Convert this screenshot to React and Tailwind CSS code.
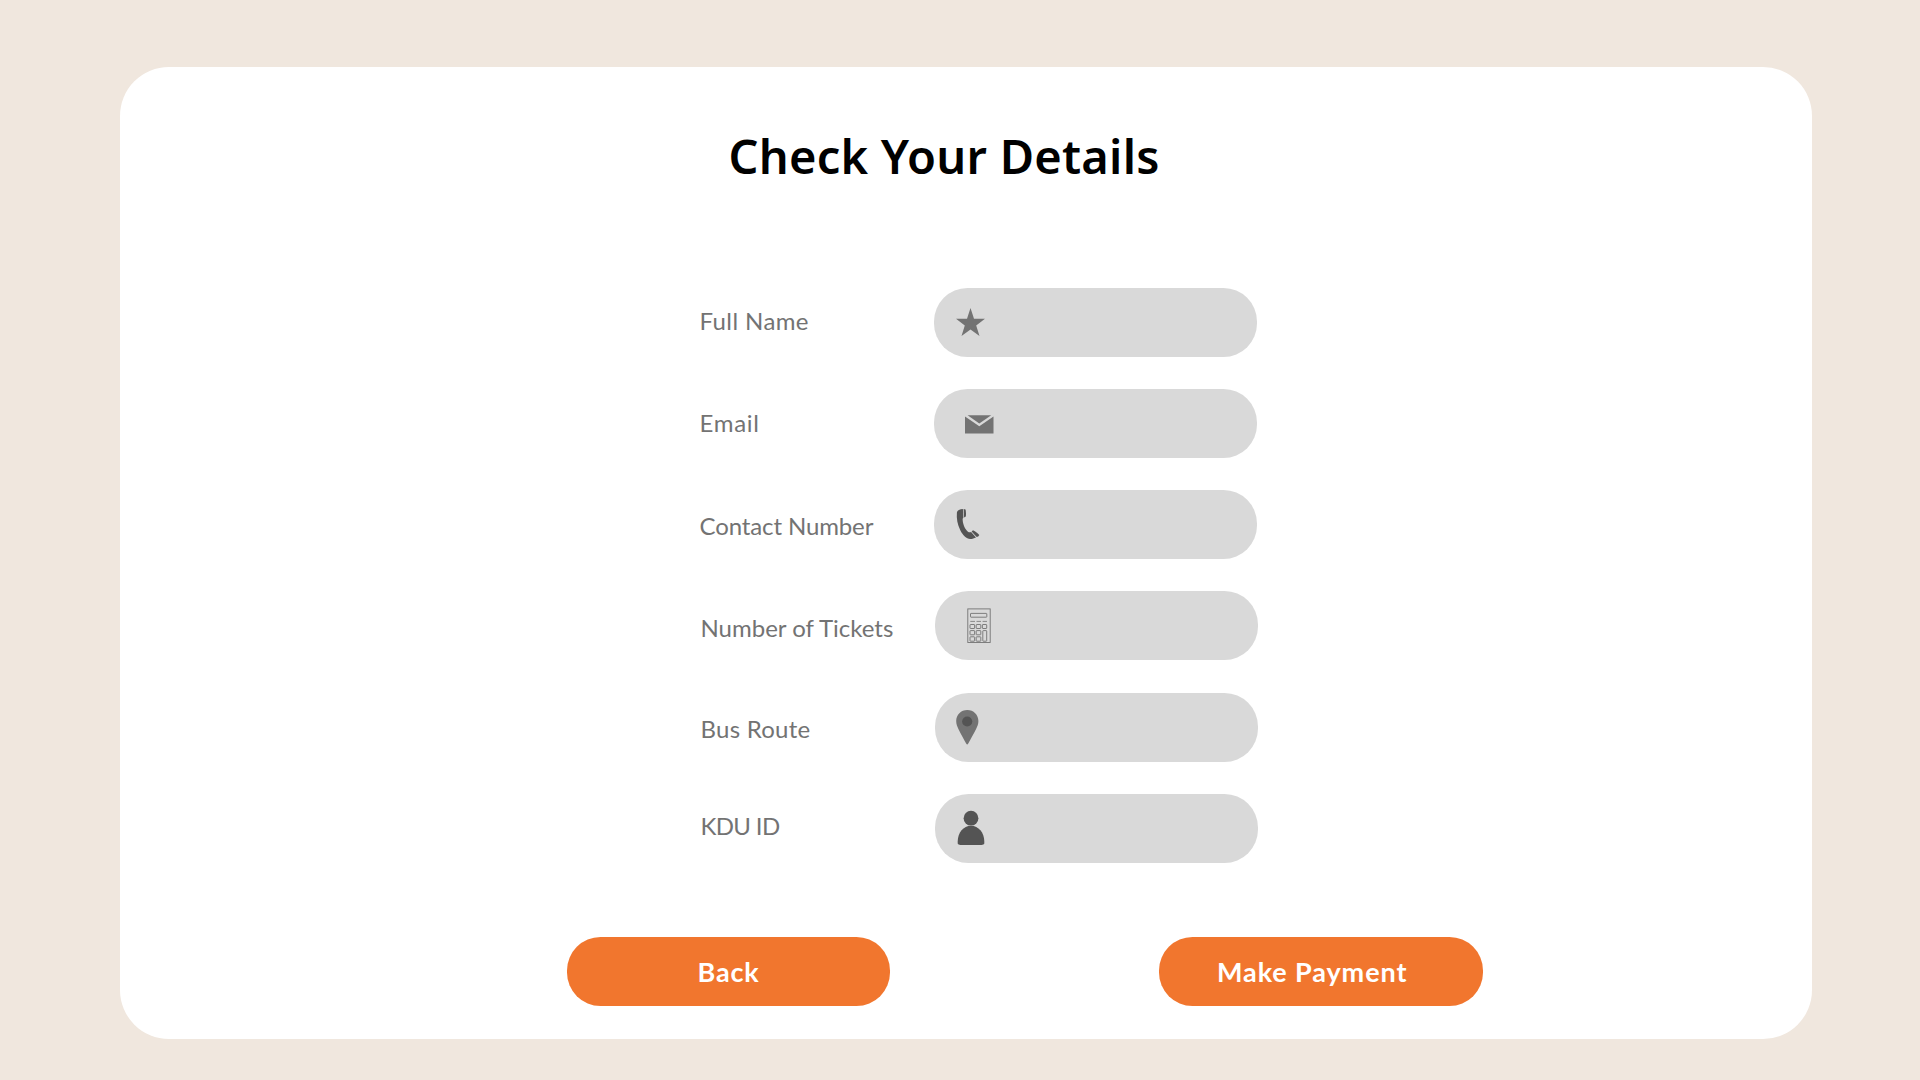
import React from "react";

const StarIcon = () => (
  <svg className="ml-[22.5px] mt-[20px] h-[28px] w-[29px]" viewBox="0 0 29 28" fill="#737373">
    <path d="M14.5 0L18 10.8H29L20.2 17.4L23.5 28L14.5 21.5L5.5 28L8.8 17.4L0 10.8H11Z" />
  </svg>
);

const MailIcon = () => (
  <svg className="ml-[31px] mt-[26.5px] h-[19px] w-[29px]" viewBox="0 0 29 19">
    <path d="M2.6 0.3H26.2L14.3 8.6Z" fill="#737373" />
    <path d="M0 1.6L14.3 11.2L28.5 1.6V18.4H0Z" fill="#737373" />
  </svg>
);

const PhoneIcon = () => (
  <svg className="ml-[22px] mt-[19px] h-[30px] w-[24px]" viewBox="0 0 24 30" fill="#545454">
    <path d="M6.9 0.1C3.9 0.2 1.2 1.2 0.9 3.5C0.4 9.5 1.4 15.5 4.3 21.2C7 26.6 10.3 29.6 14.2 29.9C16.4 29.9 18.3 29.3 20 28.4L15.1 23.1C14 23.4 13.2 23.5 12.3 23C9.3 20.6 6.9 15.6 6.7 11.2C6.6 9.9 6.8 9.2 7.4 8.6Z" />
    <path d="M7.6 0.1L9.5 0.4C10.1 2.8 10.1 5.3 9.8 7.6L8.1 8.5Z" />
    <path d="M15.6 22.4L17 21.2C19.5 22.5 21.9 24.3 23.3 26L22.2 27.6L20.7 28Z" />
  </svg>
);

const CalculatorIcon = () => (
  <svg className="ml-[32px] mt-[17px] h-[36px] w-[24px]" viewBox="0 0 24 36" fill="none" stroke="#737373" strokeWidth="0.9">
    <rect x="0.8" y="0.9" width="22.4" height="33.6" />
    <rect x="3.5" y="5.4" width="16.3" height="3.8" rx="0.5" />
    <path d="M3.3 13.4H8M9.5 13.4H14M15.6 13.4H20" strokeWidth="0.8" />
    <rect x="3" y="16.5" width="4.6" height="4" rx="0.5" />
    <rect x="9.2" y="16.5" width="4.6" height="4" rx="0.5" />
    <rect x="15.4" y="16.5" width="4.3" height="4" rx="0.5" />
    <rect x="3" y="22.6" width="4.6" height="4.2" rx="0.5" />
    <rect x="9.2" y="22.6" width="4.6" height="4.2" rx="0.5" />
    <rect x="3" y="28.8" width="4.6" height="4.4" rx="0.5" />
    <rect x="9.2" y="28.8" width="4.6" height="4.4" rx="0.5" />
    <rect x="15.8" y="22.6" width="3.9" height="10.6" rx="0.5" />
  </svg>
);

const PinIcon = () => (
  <svg className="ml-[21px] mt-[17px] h-[35px] w-[23px]" viewBox="0 0 23 35">
    <path d="M11.3 0C5 0 0.2 4.8 0.2 11C0.2 14 1.2 16.5 2.4 19C5 24.4 8 29.5 10.3 33.8C10.8 34.8 11.6 34.8 12.1 33.8C14.4 29.5 17.4 24.4 20.1 19C21.4 16.5 22.4 14 22.4 11C22.4 4.8 17.6 0 11.3 0Z" fill="#737373" />
    <circle cx="11.2" cy="11.5" r="5.1" fill="#545454" />
  </svg>
);

const PersonIcon = () => (
  <svg className="ml-[22px] mt-[16px] h-[36px] w-[28px]" viewBox="0 0 28 36" fill="#545454">
    <circle cx="14" cy="8.2" r="7.4" />
    <path d="M14 15.7C21.5 15.7 27.2 22.6 27.3 31.4V33.4C27.3 34.4 24.5 35.1 21.5 35.1H6.5C3.5 35.1 0.7 34.4 0.7 33.4V31.4C0.8 22.6 6.5 15.7 14 15.7Z" />
  </svg>
);

const fields = [
  { label: "Full Name", Icon: StarIcon, text: "pt-[21px] tracking-[0.4px]", row: "" },
  { label: "Email", Icon: MailIcon, text: "pt-[22px] tracking-[0.7px]", row: "" },
  { label: "Contact Number", Icon: PhoneIcon, text: "pt-[24px] tracking-[-0.12px]", row: "" },
  { label: "Number of Tickets", Icon: CalculatorIcon, text: "pt-[25px]", row: "ml-[1px]" },
  { label: "Bus Route", Icon: PinIcon, text: "pt-[24px] tracking-[0.25px]", row: "ml-[1px] mt-[1px]" },
  { label: "KDU ID", Icon: PersonIcon, text: "pt-[20px] tracking-[-0.65px]", row: "ml-[1px]" },
];

export default function App() {
  return (
    <div className="h-[1080px] w-[1920px] overflow-hidden bg-[#f0e7de] pl-[120px] pt-[67px] font-['Lato',sans-serif]">
      <main className="flex h-[972.4px] w-[1692px] flex-col rounded-[49px] bg-white">
        <h1 className="ml-[608.5px] mt-[56.6px] h-[64px] whitespace-nowrap font-['Noto_Sans',sans-serif] text-[47px] font-semibold leading-[64px] tracking-[0.24px] text-black">
          Check Your Details
        </h1>
        <form className="ml-[579.5px] mt-[100.4px] flex flex-col gap-[32px]">
          {fields.map(({ label, Icon, text, row }) => (
            <div key={label} className={`flex h-[69px] ${row}`}>
              <label className={`w-[234.2px] whitespace-nowrap text-[24px] leading-[24px] text-[#737373] ${text}`}>
                {label}
              </label>
              <div className="h-[69px] w-[323.5px] rounded-[33.5px] bg-[#d9d9d9]">
                <Icon />
              </div>
            </div>
          ))}
        </form>
        <div className="ml-[446.8px] mt-[74px] flex gap-[269.3px] text-[27px] font-bold leading-[69px] text-white">
          <button type="button" className="h-[69px] w-[323.4px] rounded-[33.5px] bg-[#f1762e] text-center tracking-[0.8px]">
            Back
          </button>
          <button type="button" className="h-[69px] w-[323.4px] rounded-[33.5px] bg-[#f1762e] pr-[18px] text-center tracking-[0.9px]">
            Make Payment
          </button>
        </div>
      </main>
    </div>
  );
}
